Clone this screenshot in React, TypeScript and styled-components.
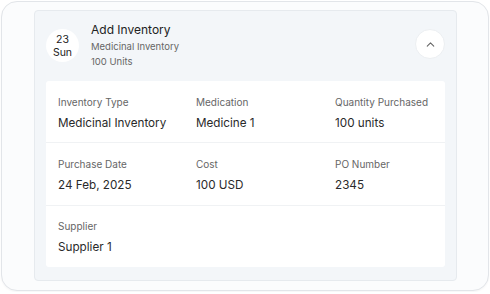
import React from "react";
import styled, { createGlobalStyle } from "styled-components";

const GlobalStyle = createGlobalStyle`
    body {
        margin: 0;
        background: #ffffff;
        font-family: Inter, "Noto Sans", sans-serif;
    }
`;

interface IField {
    label: string;
    value: string;
}

const rows: IField[][] = [
    [
        { label: "Inventory Type", value: "Medicinal Inventory" },
        { label: "Medication", value: "Medicine 1" },
        { label: "Quantity Purchased", value: "100 units" },
    ],
    [
        { label: "Purchase Date", value: "24 Feb, 2025" },
        { label: "Cost", value: "100 USD" },
        { label: "PO Number", value: "2345" },
    ],
    [{ label: "Supplier", value: "Supplier 1" }],
];

const App: React.FC = () => {
    return (
        <>
            <GlobalStyle />
            <Frame>
                <Card>
                    <Header>
                        <DateBadge>
                            <span>23</span>
                            <span>Sun</span>
                        </DateBadge>
                        <Summary>
                            <Title>Add Inventory</Title>
                            <SubText>Medicinal Inventory</SubText>
                            <SubText>100 Units</SubText>
                        </Summary>
                        <ToggleBtn aria-label="collapse">
                            <svg width="13" height="13" viewBox="0 0 24 24" fill="none" stroke="#666" strokeWidth="2" strokeLinecap="round" strokeLinejoin="round">
                                <path d="M6 15l6-6 6 6" />
                            </svg>
                        </ToggleBtn>
                    </Header>
                    <Details>
                        {rows.map((row, i) => (
                            <Row key={i} $last={i === rows.length - 1}>
                                {row.map(field => (
                                    <Field key={field.label}>
                                        <Label>{field.label}</Label>
                                        <Value>{field.value}</Value>
                                    </Field>
                                ))}
                            </Row>
                        ))}
                    </Details>
                </Card>
            </Frame>
        </>
    );
};

export default App;

const Frame = styled.div`
    box-sizing: border-box;
    margin: 1px;
    width: 488px;
    height: 290px;
    padding: 8px 32px;
    border: 1px solid #e2e5e9;
    border-radius: 16px;
    background: #fbfcfd;
    box-shadow: 0 1px 2px rgba(0, 0, 0, 0.04);
`;

const Card = styled.div`
    box-sizing: border-box;
    width: 423px;
    height: 271px;
    padding: 0 11px 13px 11px;
    border: 1px solid #e6eaee;
    border-radius: 4px;
    background: #f3f6f9;
    display: flex;
    flex-direction: column;
`;

const Header = styled.div`
    display: flex;
    align-items: center;
    height: 70px;
    gap: 12px;
`;

const DateBadge = styled.div`
    width: 33px;
    height: 33px;
    border-radius: 50%;
    background: #ffffff;
    display: flex;
    flex-direction: column;
    align-items: center;
    justify-content: center;
    font-size: 10.5px;
    line-height: 13px;
    color: #222;
    margin-top: -1px;
`;

const Summary = styled.div`
    flex: 1;
    display: flex;
    flex-direction: column;
    margin-top: -2px;
`;

const Title = styled.div`
    font-size: 12px;
    line-height: 17px;
    color: #222;
    margin-bottom: 1px;
`;

const SubText = styled.div`
    font-size: 9.5px;
    line-height: 15px;
    color: #666;
`;

const ToggleBtn = styled.button`
    all: unset;
    box-sizing: border-box;
    width: 30px;
    height: 30px;
    border-radius: 50%;
    background: #ffffff;
    border: 1px solid #eceff2;
    display: flex;
    align-items: center;
    justify-content: center;
    margin-top: -4px;
`;

const Details = styled.div`
    flex: 1;
    background: #ffffff;
    border-radius: 3px;
    display: flex;
    flex-direction: column;
`;

const Row = styled.div<{ $last: boolean }>`
    flex: 1;
    display: grid;
    grid-template-columns: 138px 139px 1fr;
    align-content: center;
    padding: 3px 12px 0 12px;
    border-bottom: ${props => (props.$last ? "none" : "1px solid #f0f2f4")};
`;

const Field = styled.div`
    display: flex;
    flex-direction: column;
    gap: 7px;
`;

const Label = styled.div`
    font-size: 10px;
    line-height: 13px;
    color: #666;
`;

const Value = styled.div`
    font-size: 11.7px;
    line-height: 15px;
    color: #2a2a2a;
`;
